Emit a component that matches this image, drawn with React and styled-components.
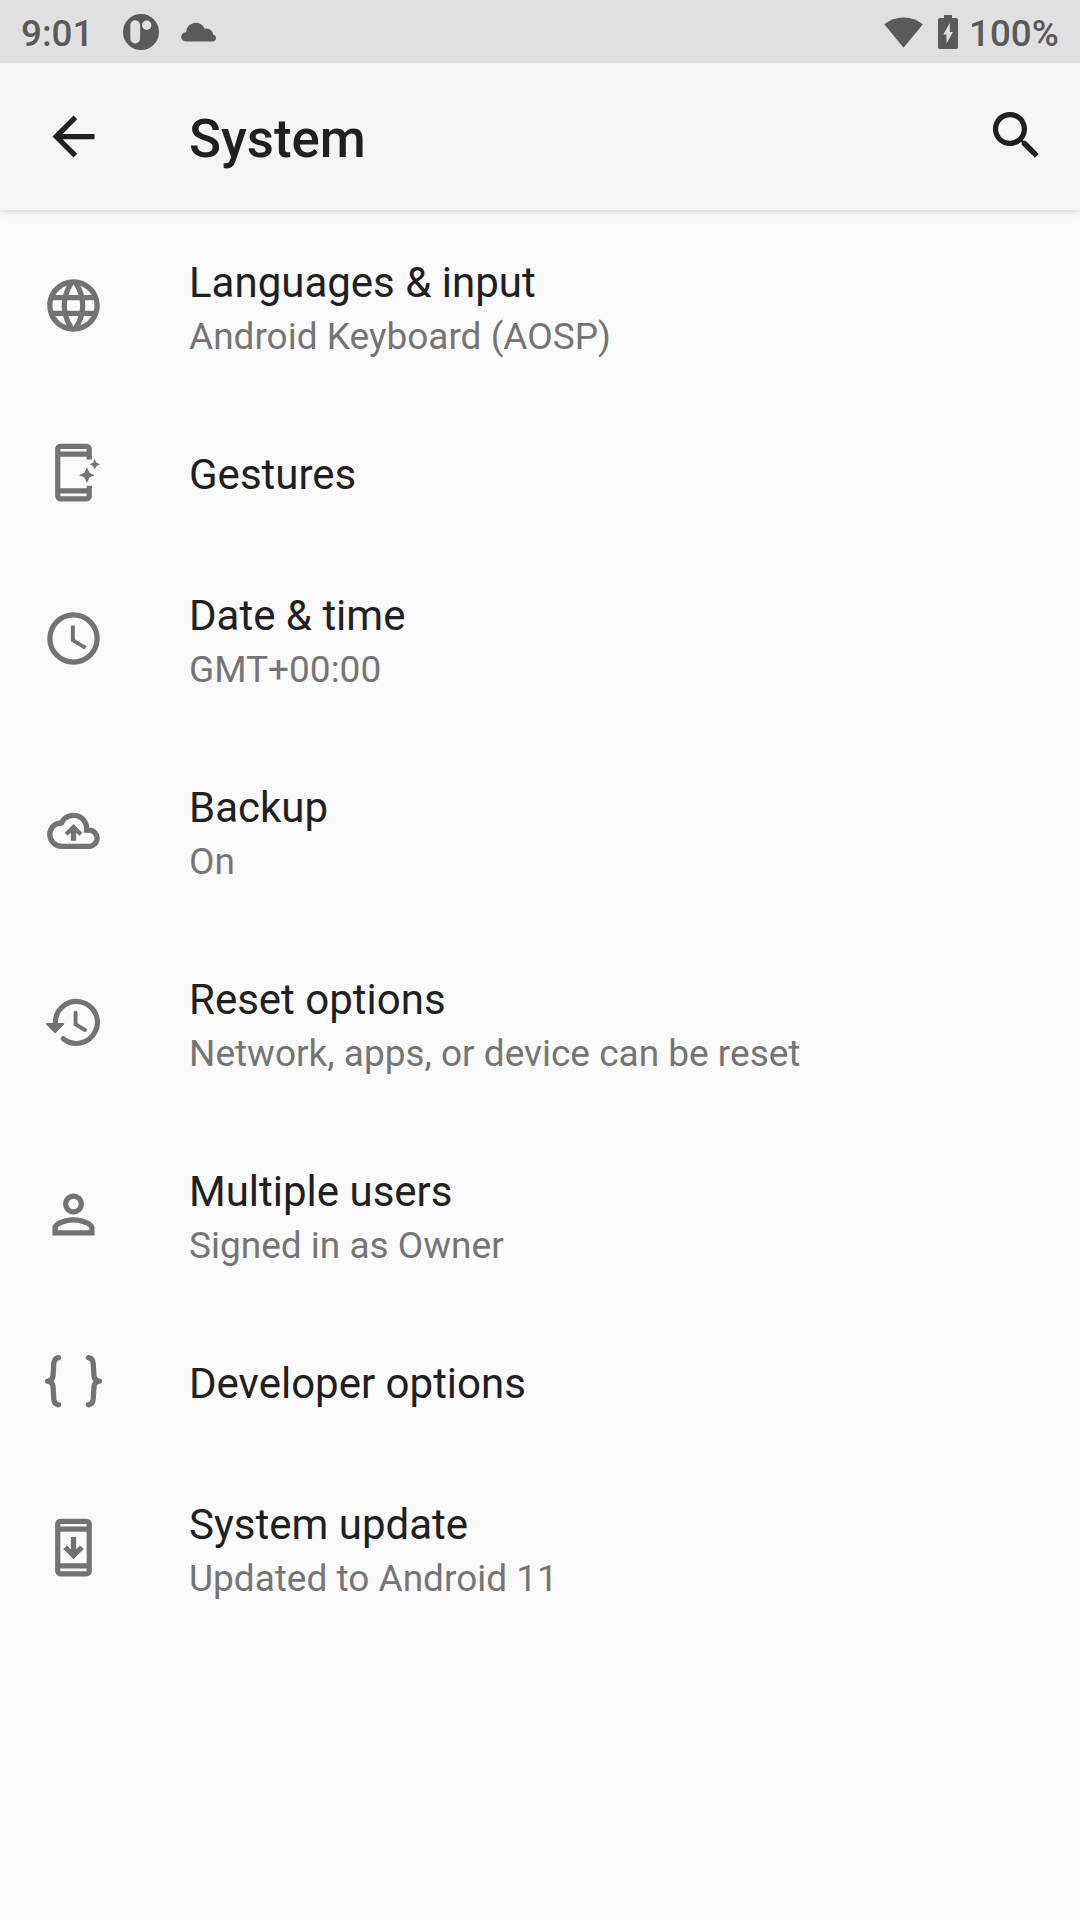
import React from 'react';
import styled, { createGlobalStyle } from 'styled-components';

const GlobalStyle = createGlobalStyle`
  * {
    box-sizing: border-box;
    margin: 0;
    padding: 0;
  }
  body {
    background: #fafafa;
    font-family: Roboto, sans-serif;
    color: #202020;
  }
  svg {
    display: block;
    flex-shrink: 0;
  }
`;

const Screen = styled.div`
  min-height: 1920px;
  background: #fafafa;
`;

const StatusBar = styled.div`
  display: flex;
  justify-content: space-between;
  height: 63px;
  padding: 0 21px;
  background: #e0e0e0;
  color: #5a5a5a;
`;

const StatusGroup = styled.div`
  display: flex;
  align-items: center;
  gap: ${(props) => props.$gap};
`;

const StatusText = styled.span`
  font-size: 36.75px;
  font-weight: 500;
  line-height: 43px;
  padding-top: 3px;
  width: ${(props) => props.$width};
  white-space: nowrap;
`;

const Toolbar = styled.header`
  display: flex;
  align-items: center;
  position: relative;
  height: 147px;
  padding: 0 32px 0 42px;
  background: #f5f5f5;
  box-shadow: 0 2px 4px rgba(0, 0, 0, 0.08), 0 4px 10px rgba(0, 0, 0, 0.06);
`;

const ToolbarTitle = styled.h1`
  flex: 1;
  margin-left: 84px;
  padding-top: 4px;
  font-size: 52.8px;
  font-weight: 500;
  line-height: 62px;
`;

const SearchButton = styled.div`
  margin-bottom: 2px;
`;

const List = styled.ul`
  list-style: none;
`;

const Row = styled.li`
  display: flex;
  align-items: center;
  height: ${(props) => (props.$single ? '141px' : '192px')};
  padding-left: 42px;
  color: #737373;
`;

const RowIcon = styled.div`
  margin-bottom: ${(props) => (props.$single ? '0' : '1px')};
`;

const RowText = styled.div`
  margin-left: 84px;
  padding-top: 5px;
`;

const RowTitle = styled.p`
  font-size: 42px;
  line-height: 56px;
  color: #202020;
`;

const RowSummary = styled.p`
  font-size: 37px;
  line-height: 51px;
  color: #757575;
`;

function Icon({ size = 63, children }) {
  return (
    <svg width={size} height={size} viewBox="0 0 24 24" fill="currentColor">
      {children}
    </svg>
  )
}

const icons = {
  globe: (
    <path d="M11.99 2C6.47 2 2 6.48 2 12s4.47 10 9.99 10C17.52 22 22 17.52 22 12S17.52 2 11.99 2zm6.93 6h-2.95c-.32-1.25-.78-2.45-1.38-3.56 1.84.63 3.37 1.91 4.33 3.56zM12 4.04c.83 1.2 1.48 2.53 1.91 3.96h-3.82c.43-1.43 1.08-2.76 1.91-3.96zM4.26 14C4.1 13.36 4 12.69 4 12s.1-1.36.26-2h3.38c-.08.66-.14 1.32-.14 2 0 .68.06 1.34.14 2H4.26zm.82 2h2.95c.32 1.25.78 2.45 1.38 3.56-1.84-.63-3.37-1.9-4.33-3.56zm2.95-8H5.08c.96-1.66 2.49-2.93 4.33-3.56C8.81 5.55 8.35 6.75 8.03 8zM12 19.96c-.83-1.2-1.48-2.53-1.91-3.96h3.82c-.43 1.43-1.08 2.76-1.91 3.96zM14.34 14H9.66c-.09-.66-.16-1.32-.16-2 0-.68.07-1.35.16-2h4.68c.09.65.16 1.32.16 2 0 .68-.07 1.34-.16 2zm.25 5.56c.6-1.11 1.06-2.31 1.38-3.56h2.95c-.96 1.65-2.49 2.93-4.33 3.56zM16.36 14c.08-.66.14-1.32.14-2 0-.68-.06-1.34-.14-2h3.38c.16.64.26 1.31.26 2s-.1 1.36-.26 2h-3.38z" />
  ),
  gestures: (
    <>
      <path fillRule="evenodd" d="M7 1h10a2 2 0 0 1 2 2v4h-2V6H7v12h10v-1h2v4a2 2 0 0 1-2 2H7a2 2 0 0 1-2-2V3a2 2 0 0 1 2-2zM7 3v1h10V3zM7 20v1h10v-1z" />
      <path d="M17.1 10l.95 2.05 2.05.95-2.05.95L17.1 16l-.95-2.05L14.1 13l2.05-.95zM20.1 6.9l.65 1.35 1.35.65-1.35.65-.65 1.35-.65-1.35-1.35-.65 1.35-.65z" />
    </>
  ),
  clock: (
    <>
      <circle cx="12" cy="12" r="9" fill="none" stroke="currentColor" strokeWidth="2" />
      <path d="M12.5 7H11v6l5.25 3.15.75-1.23-4.5-2.67z" />
    </>
  ),
  backup: (
    <>
      <path d="M7.45 18A4.45 4.45 0 0 1 7.45 9.05A5.05 5.05 0 0 1 17 11.9H17.95a3.05 3.05 0 0 1 0 6.1z" fill="none" stroke="currentColor" strokeWidth="2" />
      <path d="M12 9.5l3.35 3.4-1.05 1.1L13 12.9v3h-2v-3L9.7 14l-1.05-1.1z" />
    </>
  ),
  reset: (
    <>
      <path d="M5.1 12.6V12a8 8 0 1 1 3 6.2" fill="none" stroke="currentColor" strokeWidth="1.95" strokeLinecap="round" />
      <path d="M1.9 12.2h6.2c.4 0 .5.4.3.6l-3.1 3.1c-.2.2-.4.2-.6 0l-3.1-3.1c-.2-.2-.1-.6.3-.6z" />
      <path d="M12.8 8.3v4.4l3.6 2.15" fill="none" stroke="currentColor" strokeWidth="1.5" strokeLinecap="round" />
    </>
  ),
  user: (
    <>
      <circle cx="12" cy="8" r="3" fill="none" stroke="currentColor" strokeWidth="2" />
      <path fillRule="evenodd" d="M12 13c-2.67 0-8 1.34-8 4v3h16v-3c0-2.66-5.33-4-8-4zM6 18v-.99C6.2 16.29 9.3 15 12 15s5.8 1.29 6 2v1z" />
    </>
  ),
  braces: (
    <path
      d="M6.3 2.9C5 3.2 4.5 4 4.5 5.2L4.2 9.8c-.1 1.2-.8 1.9-2.1 2.1 1.3.2 2 .9 2.1 2.1l.3 4.8c0 1.2.5 1.8 1.8 2.1M17.7 2.9c1.3.3 1.8 1.1 1.8 2.3l.3 4.6c.1 1.2.8 1.9 2.1 2.1-1.3.2-2 .9-2.1 2.1l-.3 4.8c0 1.2-.5 1.8-1.8 2.1"
      fill="none"
      stroke="currentColor"
      strokeWidth="2"
      strokeLinecap="round"
      strokeLinejoin="round"
    />
  ),
  update: (
    <>
      <path fillRule="evenodd" d="M7 1h10a2 2 0 0 1 2 2v18a2 2 0 0 1-2 2H7a2 2 0 0 1-2-2V3a2 2 0 0 1 2-2zM7 6v12h10V6zM7 3h10v1H7zM7 20h10v1H7z" />
      <path d="M11 8h2v4.7l1.5-1.5 1.4 1.4L12 16.45 8.1 12.6l1.4-1.4 1.5 1.5z" />
    </>
  ),
}

const items = [
  { title: 'Languages & input', summary: 'Android Keyboard (AOSP)', icon: 'globe' },
  { title: 'Gestures', icon: 'gestures' },
  { title: 'Date & time', summary: 'GMT+00:00', icon: 'clock' },
  { title: 'Backup', summary: 'On', icon: 'backup' },
  { title: 'Reset options', summary: 'Network, apps, or device can be reset', icon: 'reset' },
  { title: 'Multiple users', summary: 'Signed in as Owner', icon: 'user' },
  { title: 'Developer options', icon: 'braces' },
  { title: 'System update', summary: 'Updated to Android 11', icon: 'update' },
]

function SettingsRow(props) {
  return (
    <Row $single={!props.summary}>
      <RowIcon $single={!props.summary}>
        <Icon>{icons[props.icon]}</Icon>
      </RowIcon>
      <RowText>
        <RowTitle>{props.title}</RowTitle>
        {props.summary && <RowSummary>{props.summary}</RowSummary>}
      </RowText>
    </Row>
  )
}

export default function App() {
  return (
    <Screen>
      <GlobalStyle />
      <StatusBar>
        <StatusGroup $gap="22px">
          <StatusText $width="80px">9:01</StatusText>
          <svg width="36" height="36" viewBox="0 0 36 36" fill="currentColor">
            <path fillRule="evenodd" d="M18 0a18 18 0 1 1 0 36a18 18 0 1 1 0-36zM12.2 6.3a4.9 4.9 0 0 0-4.9 4.9v13.3a4.9 4.9 0 0 0 9.8 0V11.2a4.9 4.9 0 0 0-4.9-4.9zM23.7 6.6a4.7 4.7 0 1 0 0 9.4a4.7 4.7 0 1 0 0-9.4z" />
          </svg>
          <svg width="36" height="20" viewBox="0 0 36 20" fill="currentColor">
            <path d="M4.6 19.5a4.6 4.6 0 0 1 .5-9.2A9.6 9.6 0 0 1 23.6 6.7A7 7 0 0 1 32.3 12.7A3.5 3.5 0 0 1 32.5 19.5z" />
          </svg>
        </StatusGroup>
        <StatusGroup $gap="11px">
          <svg width="43" height="34" viewBox="0 0 43 34" fill="currentColor">
            <path d="M-.7 9.3A31 31 0 0 1 37.9 9.3L18.6 32.8z" transform="translate(1)" />
          </svg>
          <svg width="20" height="34" viewBox="0 0 20 34" fill="currentColor">
            <path fillRule="evenodd" d="M6 0h8v3h4a2 2 0 0 1 2 2v27a2 2 0 0 1-2 2H2a2 2 0 0 1-2-2V5a2 2 0 0 1 2-2h4zM11.8 8L5.3 19.5h3.2v9L15 17h-3.2z" />
          </svg>
          <StatusText $width="90px">100%</StatusText>
        </StatusGroup>
      </StatusBar>
      <Toolbar>
        <Icon>
          <path d="M20 11H7.83l5.59-5.59L12 4l-8 8 8 8 1.41-1.41L7.83 13H20z" />
        </Icon>
        <ToolbarTitle>System</ToolbarTitle>
        <SearchButton>
          <Icon>
            <path d="M15.5 14h-.79l-.28-.27A6.471 6.471 0 0 0 16 9.5 6.5 6.5 0 1 0 9.5 16c1.61 0 3.09-.59 4.23-1.57l.27.28v.79l5 4.99L20.49 19l-4.99-5zm-6 0C7.01 14 5 11.99 5 9.5S7.01 5 9.5 5 14 7.01 14 9.5 11.99 14 9.5 14z" />
          </Icon>
        </SearchButton>
      </Toolbar>
      <List>
        {items.map((item) => {
          return <SettingsRow key={item.title} {...item} />
        })}
      </List>
    </Screen>
  )
}
